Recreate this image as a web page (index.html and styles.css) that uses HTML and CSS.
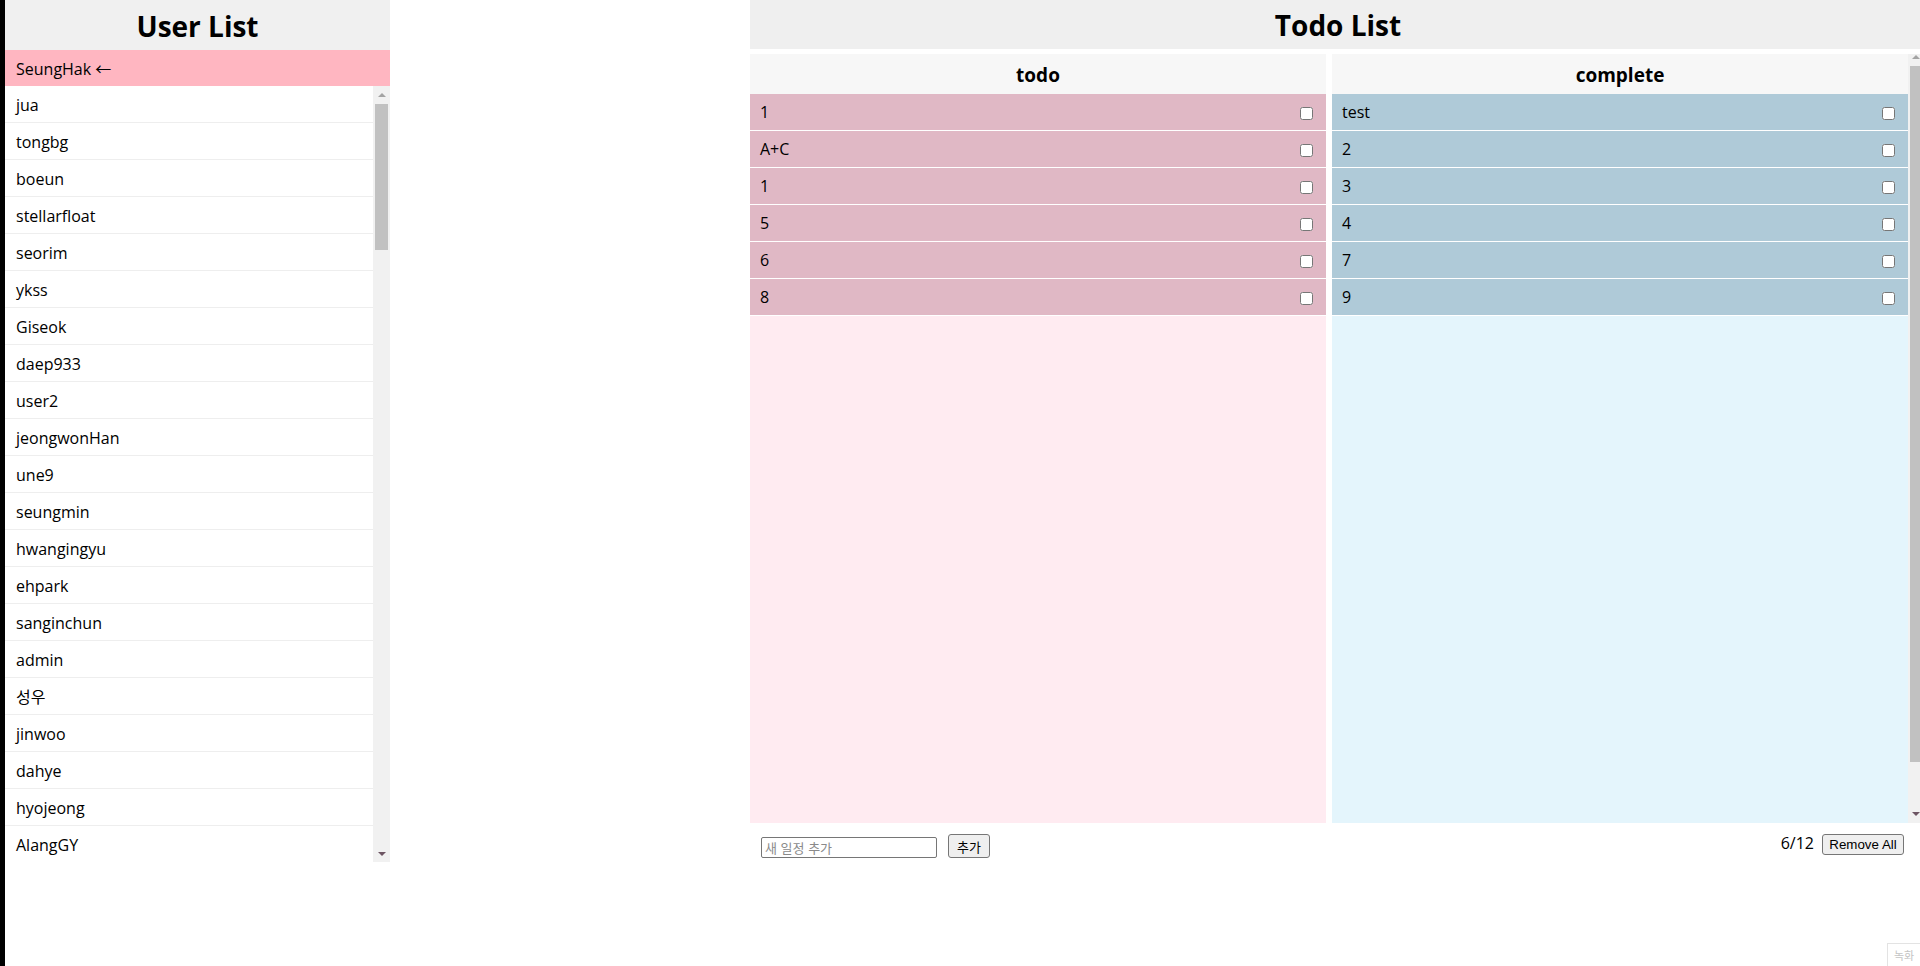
FILE: index.html
```html
<!DOCTYPE html>
<html lang="ko">
<head>
<meta charset="utf-8">
<title>Todo</title>
<link rel="stylesheet" href="styles.css">
</head>
<body>
<div class="app">
  <div class="edge"></div>
  <aside class="users">
    <h2 class="panel-title">User List</h2>
    <div class="me">SeungHak ←</div>
    <div class="user-body">
      <ul class="user-list">
        <li>jua</li>
        <li>tongbg</li>
        <li>boeun</li>
        <li>stellarfloat</li>
        <li>seorim</li>
        <li>ykss</li>
        <li>Giseok</li>
        <li>daep933</li>
        <li>user2</li>
        <li>jeongwonHan</li>
        <li>une9</li>
        <li>seungmin</li>
        <li>hwangingyu</li>
        <li>ehpark</li>
        <li>sanginchun</li>
        <li>admin</li>
        <li>성우</li>
        <li>jinwoo</li>
        <li>dahye</li>
        <li>hyojeong</li>
        <li>AlangGY</li>
      </ul>
      <div class="vscroll">
        <div class="sb-btn"><span class="arrow up"></span></div>
        <div class="sb-track"><div class="sb-thumb"></div></div>
        <div class="sb-btn"><span class="arrow down"></span></div>
      </div>
    </div>
  </aside>
  <main class="todo">
    <h2 class="panel-title todo-title">Todo List</h2>
    <div class="board-wrap">
      <div class="board">
        <section class="col col-todo">
          <h3 class="col-head">todo</h3>
          <ul class="items">
            <li><span>1</span><input type="checkbox"></li>
            <li><span>A+C</span><input type="checkbox"></li>
            <li><span>1</span><input type="checkbox"></li>
            <li><span>5</span><input type="checkbox"></li>
            <li><span>6</span><input type="checkbox"></li>
            <li><span>8</span><input type="checkbox"></li>
          </ul>
        </section>
        <section class="col col-complete">
          <h3 class="col-head">complete</h3>
          <ul class="items">
            <li><span>test</span><input type="checkbox"></li>
            <li><span>2</span><input type="checkbox"></li>
            <li><span>3</span><input type="checkbox"></li>
            <li><span>4</span><input type="checkbox"></li>
            <li><span>7</span><input type="checkbox"></li>
            <li><span>9</span><input type="checkbox"></li>
          </ul>
        </section>
      </div>
      <div class="vscroll narrow">
        <div class="sb-btn"><span class="arrow up"></span></div>
        <div class="sb-track"><div class="sb-thumb"></div></div>
        <div class="sb-btn"><span class="arrow down"></span></div>
      </div>
    </div>
    <div class="controls">
      <div class="add">
        <input class="new" type="text" placeholder="새 일정 추가">
        <button class="btn add-btn">추가</button>
      </div>
      <div class="stats">
        <span class="count">6/12</span>
        <button class="btn remove-btn">Remove All</button>
      </div>
    </div>
  </main>
</div>
<div class="rec">녹화</div>
</body>
</html>
```
FILE: styles.css
```css
html, body {
  margin: 0;
  height: 100%;
}
body {
  font-family: "Open Sans", "Noto Sans CJK KR", sans-serif;
  color: #000;
  background: #fff;
  overflow: hidden;
}
.app {
  display: flex;
  height: 966px;
}
.edge {
  width: 5px;
  flex: none;
  background: #000;
}
.users {
  width: 385px;
  flex: none;
  display: flex;
  flex-direction: column;
  align-self: flex-start;
}
.panel-title {
  box-sizing: border-box;
  margin: 0;
  height: 50px;
  padding-top: 2px;
  line-height: 48px;
  background: #f0f0f0;
  text-align: center;
  font-size: 28px;
  font-weight: 700;
}
.me {
  box-sizing: border-box;
  height: 36px;
  padding: 2px 0 0 11px;
  line-height: 34px;
  background: #ffb6c1;
  font-size: 16px;
}
.user-body {
  display: flex;
  height: 776px;
}
.user-list {
  flex: 1;
  list-style: none;
  margin: 0;
  padding: 0;
  overflow: hidden;
}
.user-list li {
  box-sizing: border-box;
  height: 37px;
  padding: 2px 0 0 11px;
  line-height: 34px;
  border-bottom: 1px solid #eeeeee;
  font-size: 16px;
}

/* drawn scrollbars */
.vscroll {
  width: 17px;
  flex: none;
  display: flex;
  flex-direction: column;
  background: #f1f1f1;
}
.sb-btn {
  height: 17px;
  flex: none;
  display: flex;
  align-items: center;
  justify-content: center;
}
.sb-track {
  flex: 1;
  padding-top: 1px;
}
.sb-thumb {
  height: 146px;
  margin: 0 2px;
  background: #c1c1c1;
}
.arrow {
  width: 0;
  height: 0;
  border-left: 4px solid transparent;
  border-right: 4px solid transparent;
}
.arrow.up {
  border-bottom: 4px solid #a3a3a3;
}
.arrow.down {
  border-top: 4px solid #6d5563;
}
.vscroll.narrow {
  width: 12px;
}
.vscroll.narrow .sb-btn {
  height: 12px;
  align-items: flex-start;
  justify-content: flex-end;
  padding-top: 1px;
  box-sizing: border-box;
}
.vscroll.narrow .sb-track {
  padding-top: 0;
}
.vscroll.narrow .sb-thumb {
  height: 696px;
  margin: 0 0 0 2px;
}

.todo {
  width: 1170px;
  flex: none;
  margin-left: 360px;
}
.todo-title {
  height: 49px;
  line-height: 47px;
  margin-bottom: 5px;
  background: #efefef;
  padding-left: 6px;
}
.board-wrap {
  display: flex;
  height: 769px;
}
.board {
  flex: 1;
  display: flex;
  gap: 6px;
  overflow: hidden;
}
.col {
  flex: 1;
  min-height: 823px;
}
.col-todo {
  background: #ffebf1;
}
.col-complete {
  background: #e4f5fc;
}
.col-head {
  box-sizing: border-box;
  margin: 0;
  height: 40px;
  padding-top: 2px;
  line-height: 38px;
  background: #f7f7f7;
  text-align: center;
  font-size: 19px;
  font-weight: 700;
}
.items {
  list-style: none;
  margin: 0;
  padding: 0;
}
.items li {
  display: flex;
  align-items: center;
  justify-content: space-between;
  height: 36px;
  padding-left: 10px;
  border-bottom: 1px solid #fff;
  font-size: 16px;
}
.col-todo .items li {
  background: #e0b8c5;
}
.col-complete .items li {
  background: #afcad8;
}
.items input {
  width: 13px;
  height: 13px;
  margin: 3px 13px 0 0;
}
.controls {
  display: flex;
  justify-content: space-between;
  align-items: flex-start;
  padding: 11px 16px 0 11px;
}
.add, .stats {
  display: flex;
  align-items: flex-start;
}
.new {
  box-sizing: border-box;
  width: 176px;
  height: 21px;
  margin: 3px 0 0;
  padding: 0 3px;
  border: 1px solid #767676;
  border-radius: 2px;
  font-family: "Noto Sans CJK KR", sans-serif;
  font-size: 13px;
}
.new::placeholder {
  color: #8a8a8a;
}
.btn {
  box-sizing: border-box;
  background: #efefef;
  border: 1px solid #767676;
  border-radius: 3px;
  padding: 0 6px;
  color: #000;
}
.add-btn {
  width: 42px;
  height: 24px;
  margin-left: 11px;
  font-family: "Noto Sans CJK KR", sans-serif;
  font-size: 13px;
}
.count {
  font-size: 16px;
  line-height: 19px;
  margin-right: 8px;
}
.remove-btn {
  width: 82px;
  height: 21px;
  font-family: "Liberation Sans", Arial, sans-serif;
  font-size: 13.33px;
}
.rec {
  position: fixed;
  right: 0;
  bottom: 0;
  width: 33px;
  height: 23px;
  box-sizing: border-box;
  border: 1px solid #e3e3e3;
  border-right: 0;
  border-bottom: 0;
  background: #fff;
  color: #c4c4c4;
  font-family: "Noto Sans CJK KR", sans-serif;
  font-size: 11px;
  line-height: 22px;
  text-align: center;
}
```
